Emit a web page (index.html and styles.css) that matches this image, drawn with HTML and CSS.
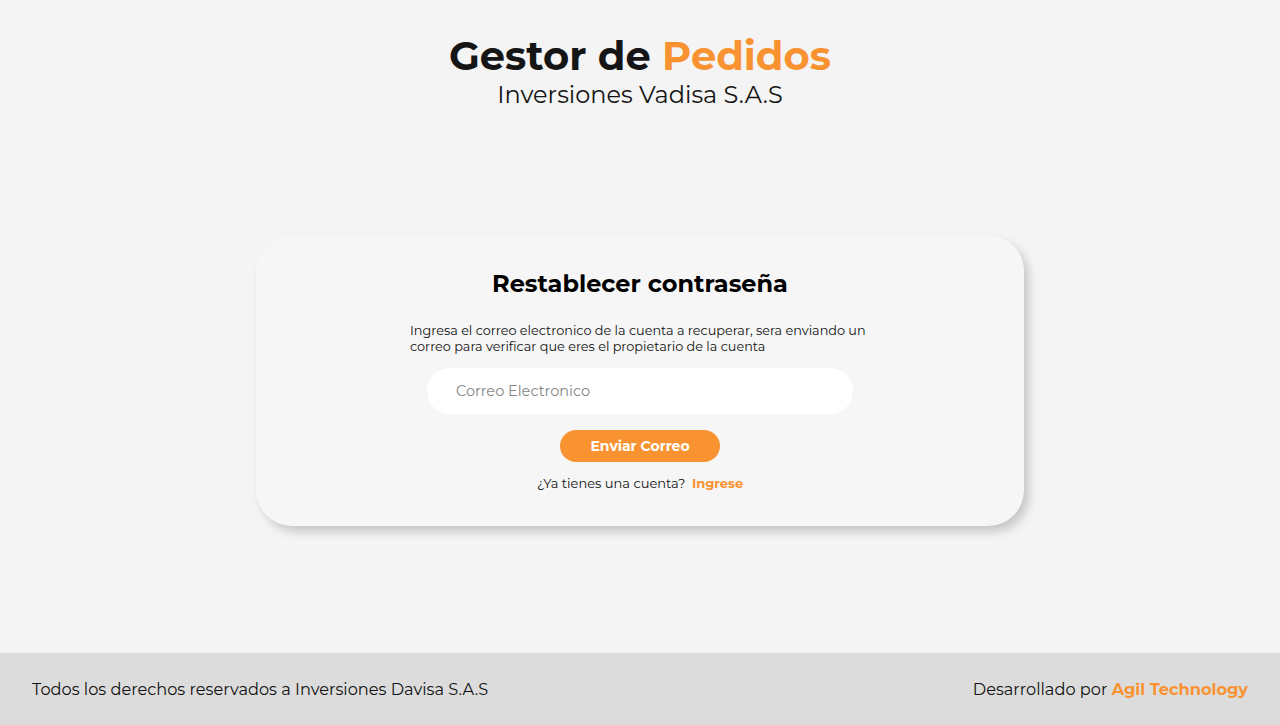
FILE: index.html
```html
<!DOCTYPE html>
<html lang="es">
<head>
<meta charset="utf-8">
<title>Gestor de Pedidos</title>
<link rel="stylesheet" href="styles.css">
</head>
<body>
<div class="page">
  <header class="header">
    <h1 class="brand">Gestor de <span class="accent">Pedidos</span></h1>
    <p class="company">Inversiones Vadisa S.A.S</p>
  </header>
  <main class="main">
    <section class="card">
      <h2 class="card-title">Restablecer contraseña</h2>
      <p class="card-text">Ingresa el correo electronico de la cuenta a recuperar, sera enviando un correo para verificar que eres el propietario de la cuenta</p>
      <input class="field" type="email" placeholder="Correo Electronico">
      <button class="btn" type="button">Enviar Correo</button>
      <p class="login">¿Ya tienes una cuenta? <a class="login-link" href="#">Ingrese</a></p>
    </section>
  </main>
  <footer class="footer">
    <span class="footer-left">Todos los derechos reservados a Inversiones Davisa S.A.S</span>
    <span class="footer-right">Desarrollado por <a class="footer-link" href="#">Agil Technology</a></span>
  </footer>
</div>
</body>
</html>
```

FILE: styles.css
```css
* { box-sizing: border-box; }
html, body { margin: 0; padding: 0; }
body {
  background: #f4f4f4;
  font-family: "Montserrat", "DejaVu Sans", sans-serif;
  color: #111;
}
.page {
  min-height: 725px;
  display: flex;
  flex-direction: column;
}
.header {
  text-align: center;
  padding-top: 32px;
}
.brand {
  margin: 0;
  font-size: 40px;
  line-height: 48px;
  font-weight: 700;
  color: #151515;
}
.accent { color: #f99332; }
.company {
  margin: 0;
  font-size: 24px;
  line-height: 30px;
  font-weight: 400;
  color: #151515;
}
.main {
  flex: 1;
  display: flex;
  justify-content: center;
  align-items: flex-start;
  padding-top: 125px;
}
.card {
  width: 768px;
  background: #f6f6f6;
  border-radius: 36px;
  box-shadow: 5px 6px 10px rgba(0, 0, 0, 0.18);
  padding: 34px 0 35px;
  display: flex;
  flex-direction: column;
  align-items: center;
}
.card-title {
  margin: 0;
  font-size: 24px;
  line-height: 30px;
  font-weight: 700;
  color: #000;
}
.card-text {
  margin: 24px 0 0;
  width: 460px;
  font-size: 12.8px;
  line-height: 16px;
  color: #111;
}
.field {
  margin-top: 13px;
  width: 426px;
  height: 46px;
  border: none;
  border-radius: 23px;
  background: #fff;
  padding: 0 29px;
  font-family: inherit;
  font-size: 14.5px;
  color: #333;
  outline: none;
}
.field::placeholder { color: #858585; }
.btn {
  margin-top: 16px;
  width: 160px;
  height: 32px;
  border: none;
  border-radius: 16px;
  background: #f99332;
  color: #fff;
  font-family: inherit;
  font-size: 14px;
  font-weight: 700;
  cursor: pointer;
}
.login {
  margin: 13px 0 0;
  font-size: 13px;
  line-height: 16px;
  color: #111;
}
.login-link {
  margin-left: 3px;
  color: #f99332;
  font-weight: 700;
  text-decoration: none;
}
.footer {
  height: 72px;
  background: #dcdcdc;
  display: flex;
  align-items: center;
  justify-content: space-between;
  padding: 0 32px;
  font-size: 16.2px;
  color: #111;
}
.footer-link {
  color: #f99332;
  font-weight: 700;
  text-decoration: none;
}
```
